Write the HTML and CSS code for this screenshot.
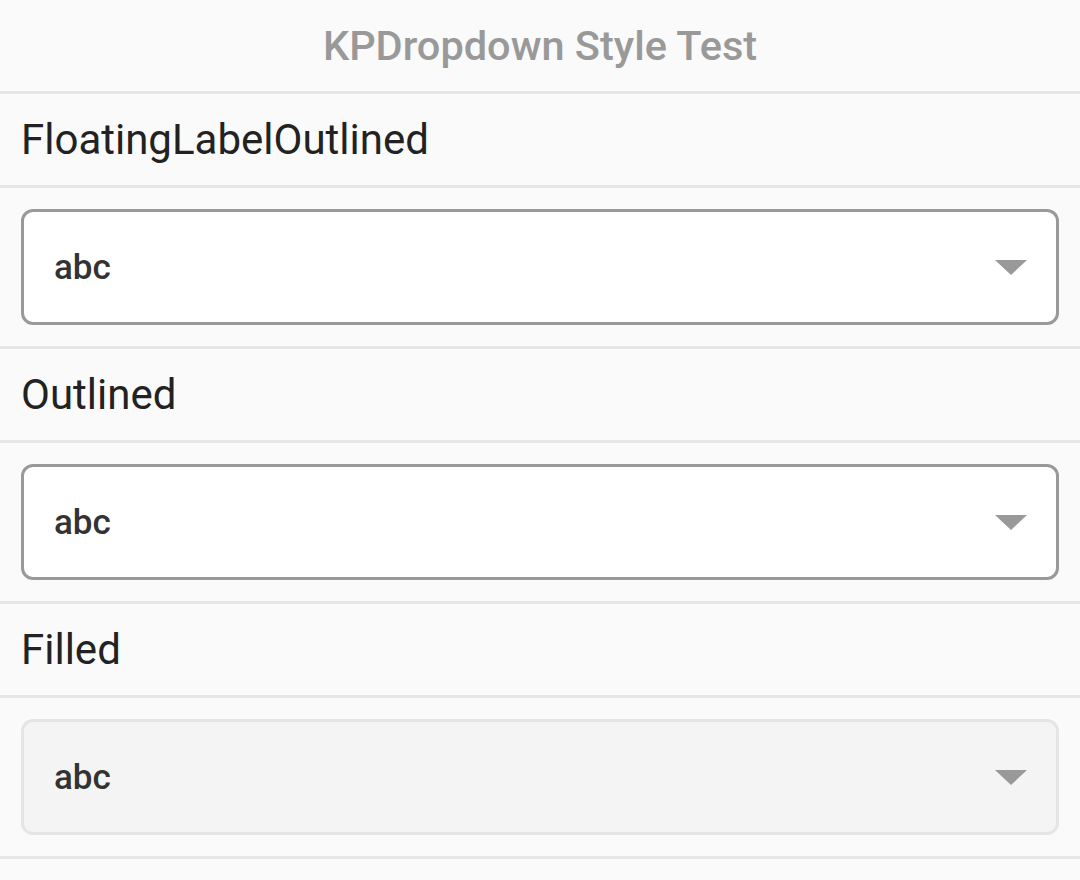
FILE: index.html
```html
<!DOCTYPE html>
<html>
<head>
<meta charset="utf-8">
<link rel="stylesheet" href="styles.css">
</head>
<body>
<header class="title">KPDropdown Style Test</header>

<div class="label-row">FloatingLabelOutlined</div>
<div class="field-row">
  <div class="dropdown outlined">
    <span class="value">abc</span>
    <svg class="arrow" width="32" height="15" viewBox="0 0 32 15"><path d="M0 0H32L16 15Z" fill="#999"/></svg>
  </div>
</div>

<div class="label-row">Outlined</div>
<div class="field-row">
  <div class="dropdown outlined">
    <span class="value">abc</span>
    <svg class="arrow" width="32" height="15" viewBox="0 0 32 15"><path d="M0 0H32L16 15Z" fill="#999"/></svg>
  </div>
</div>

<div class="label-row">Filled</div>
<div class="field-row">
  <div class="dropdown filled">
    <span class="value">abc</span>
    <svg class="arrow" width="32" height="15" viewBox="0 0 32 15"><path d="M0 0H32L16 15Z" fill="#999"/></svg>
  </div>
</div>
</body>
</html>
```

FILE: styles.css
```css
html, body {
  margin: 0;
  padding: 0;
  background: #fafafa;
  font-family: Roboto, "Noto Sans", "Liberation Sans", sans-serif;
}

.title {
  height: 91px;
  display: flex;
  align-items: center;
  justify-content: center;
  font-size: 41.5px;
  font-weight: 500;
  color: #999999;
  border-bottom: 3px solid #e6e6e6;
}

.label-row {
  height: 91px;
  display: flex;
  align-items: center;
  padding-left: 21px;
  font-size: 42px;
  color: #222222;
  border-bottom: 3px solid #e6e6e6;
}

.field-row {
  padding: 21px;
  border-bottom: 3px solid #e6e6e6;
}

.dropdown {
  box-sizing: border-box;
  height: 116px;
  border-radius: 12px;
  display: flex;
  align-items: center;
  justify-content: space-between;
  padding: 0 29px 0 30px;
}

.outlined {
  background: #ffffff;
  border: 3px solid #999999;
}

.filled {
  background: #f4f4f4;
  border: 3px solid #e5e5e5;
}

.value {
  font-size: 35px;
  font-weight: 500;
  color: #333333;
}

.arrow {
  display: block;
}
```
